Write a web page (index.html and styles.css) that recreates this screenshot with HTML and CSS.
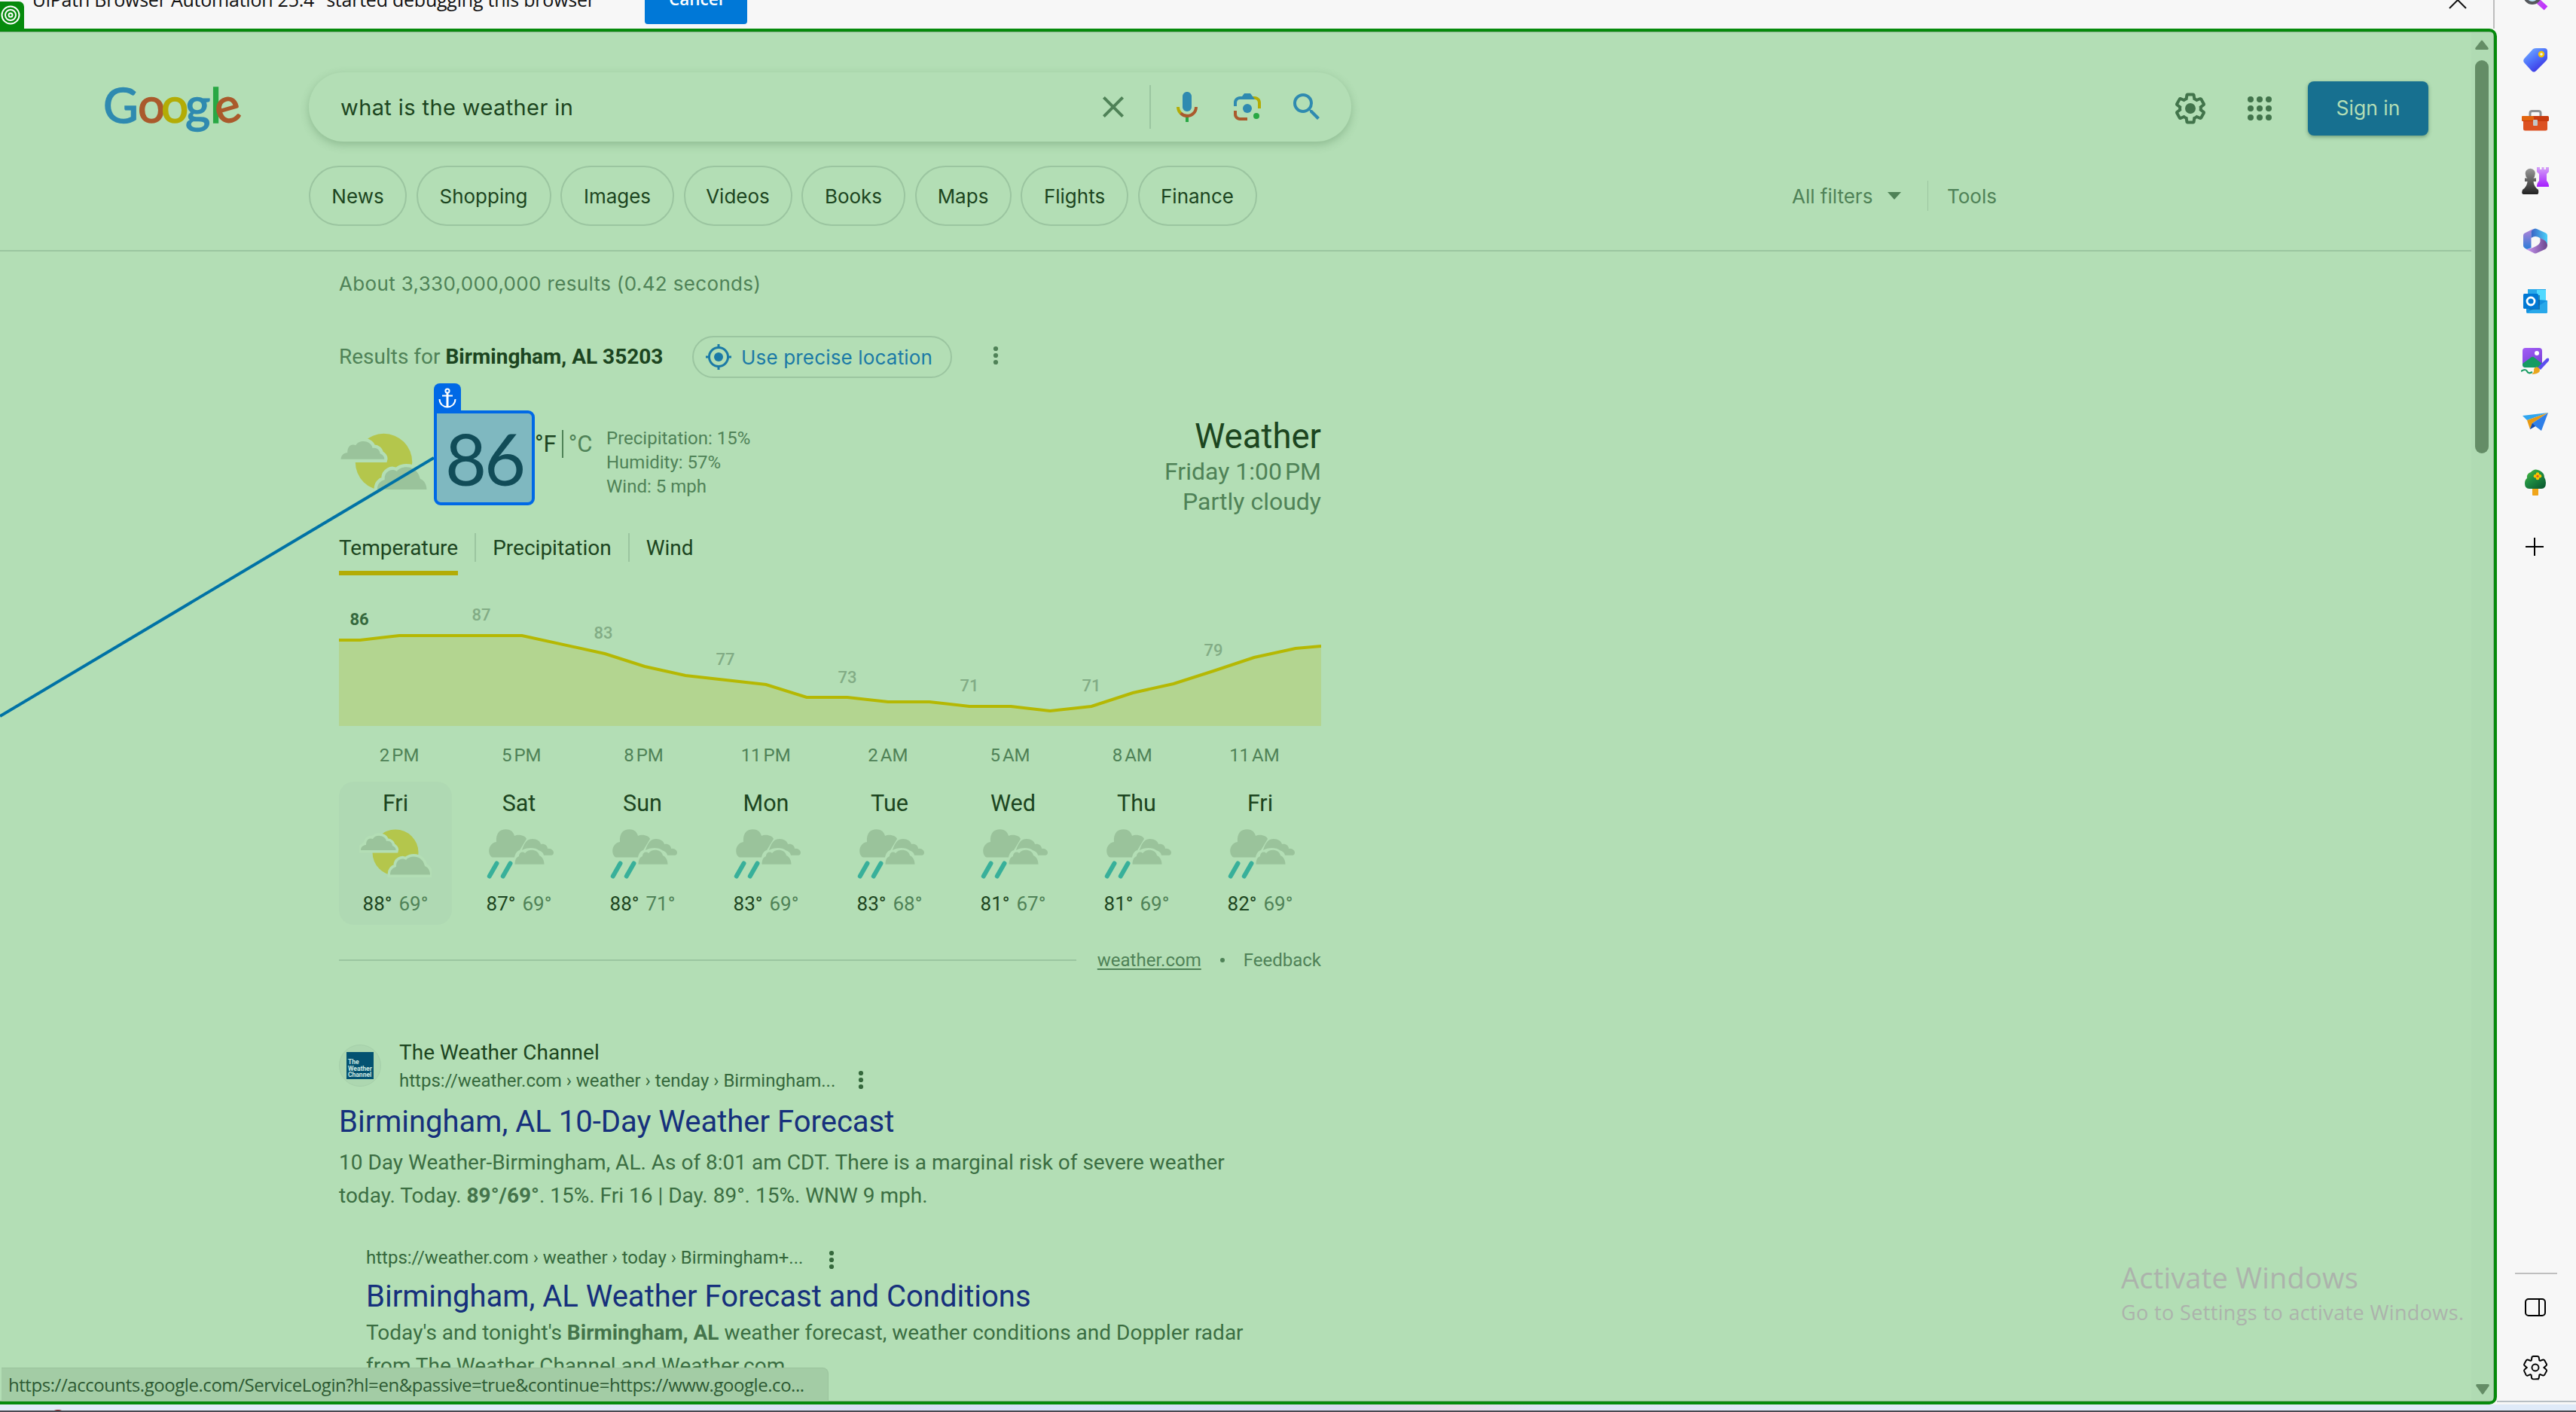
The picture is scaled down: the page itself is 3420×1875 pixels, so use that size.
FILE: index.html
```html
<!DOCTYPE html>
<html lang="en">
<head>
<meta charset="utf-8">
<title>what is the weather in - Search</title>
<link rel="stylesheet" href="styles.css">
</head>
<body>
<svg class="defs" aria-hidden="true">
  <symbol id="sun" viewBox="0 0 96 80">
    <circle cx="48" cy="40" r="30.5" fill="#b4c64c"/>
    <path class="cloud halo" d="M2 37C2 32 6 30 9 30C9 23 13 20 18 22C21 16 34 16 36 25C41 24 44 28 44 31C47 32 49 35 48.500 37Z"/>
    <path class="cloud halo" d="M41 69.500C41 63 45 60 49 59C48 50 57 46 62 50C67 43 84 43 87 58C92 60 94 65 94 69.500Z"/>
    <path class="cloud" d="M2 37C2 32 6 30 9 30C9 23 13 20 18 22C21 16 34 16 36 25C41 24 44 28 44 31C47 32 49 35 48.500 37Z"/>
    <path class="cloud" d="M41 69.500C41 63 45 60 49 59C48 50 57 46 62 50C67 43 84 43 87 58C92 60 94 65 94 69.500Z"/>
  </symbol>
  <symbol id="rain" viewBox="0 0 96 80">
    <path class="cloud" d="M13 46.500C6 44 6 28 18 26C17 14 23 9.300 30.500 9.300C38 9.300 41 14 42 18C48 15 57 18 58 22L49 37C45 38 43 42 42 46.500Z"/>
    <path class="cloud" d="M52 37C55 28 58 22 66 22C72 22 76 25 77 29C82 28 86 31 86 35C91 34 94 38 94 40C94 43 92 43.700 91 43.700L81 43.700C80 39 76 38 74 37C70 33 58 33 52 37Z"/>
    <path class="cloud halo-thin" d="M42.500 55.800C42.500 49 45 46 48 45C48 40 53 38 56 41C60 35 73 35 75 44C79 46 81.500 50 81.500 55.800Z"/>
    <path d="M18.500 54.500L8.800 71.500M36.500 54.500L26.800 71.500" stroke="#38b09a" stroke-width="6" stroke-linecap="round"/>
  </symbol>
  <symbol id="dots" viewBox="0 0 8 28">
    <circle cx="4" cy="5" r="3.100"/><circle cx="4" cy="14" r="3.100"/><circle cx="4" cy="23" r="3.100"/>
  </symbol>
</svg>

<div class="window">
  <div class="left">
    <div class="infobar">
      <span class="infobar-text">"UiPath Browser Automation 25.4" started debugging this browser</span>
      <span class="cancel">Cancel</span>
      <svg class="close" width="24" height="24" viewBox="0 0 24 24"><path d="M1 1L23 23M23 1L1 23" stroke="#111" stroke-width="2"/></svg>
    </div>

    <div class="viewport">
      <div class="page">
        <header class="header">
          <div class="search-row">
            <div class="logo"><span class="b g1">G</span><span class="r o1">o</span><span class="y o2">o</span><span class="b g2">g</span><span class="g l1">l</span><span class="r e1">e</span></div>
            <div class="searchbox">
              <span class="query">what is the weather in</span>
              <svg class="ico clear" viewBox="0 0 24 24"><path fill="#4f8257" d="M19 6.410L17.590 5 12 10.590 6.410 5 5 6.410 10.590 12 5 17.590 6.410 19 12 13.410 17.590 19 19 17.590 13.410 12z"/></svg>
              <span class="sep"></span>
              <svg class="ico mic" viewBox="0 0 24 24"><path fill="#2f8ab0" d="m12 15c1.660 0 3-1.310 3-2.970v-7.020c0-1.660-1.340-3.010-3-3.010s-3 1.340-3 3.010v7.020c0 1.660 1.340 2.970 3 2.970z"/><path fill="#29a844" d="m11 18.080h2v3.920h-2z"/><path fill="#b3ac06" d="m7.050 16.870c-1.270-1.330-2.050-2.830-2.050-4.870h2c0 1.450 0.560 2.420 1.470 3.380v0.320l-1.150 1.180z"/><path fill="#aa5a2c" d="m12 16.930a4.970 5.250 0 0 1 -3.540 -1.550l-1.410 1.490c1.260 1.340 3.020 2.130 4.950 2.130 3.870 0 6.990-2.920 6.990-7h-1.990c0 2.920-2.240 4.930-5 4.930z"/></svg>
              <svg class="ico lens" viewBox="0 0 192 192"><circle fill="#29a844" cx="144" cy="144" r="16"/><circle fill="#2f8ab0" cx="96" cy="104" r="24"/><path fill="#aa5a2c" d="M24,135.200c0,18.110,14.690,32.800,32.800,32.800H96v-16l-40.100-0.100c-8.800,0-15.900-8.190-15.900-17.900v-18H24V135.200z"/><path fill="#b3ac06" d="M168,72.800c0-18.110-14.690-32.800-32.800-32.800H116l20,16c8.800,0,16,8.290,16,18v30h16V72.800z"/><path fill="#2f8ab0" d="M112,24l-32,0L68,40H56.800C38.690,40,24,54.690,24,72.800V92h16V74c0-9.710,7.200-18,16-18h80L112,24z"/></svg>
              <svg class="ico" viewBox="0 0 24 24"><path fill="#2f8ab0" d="M15.500 14h-.79l-.28-.27A6.471 6.471 0 0 0 16 9.500 6.500 6.500 0 1 0 9.500 16c1.610 0 3.090-.59 4.230-1.570l.27.28v.79l5 4.990L20.490 19l-4.990-5zm-6 0C7.010 14 5 11.990 5 9.500S7.010 5 9.500 5 14 7.010 14 9.500 11.990 14 9.500 14z"/></svg>
            </div>
            <div class="account">
              <svg class="ico" viewBox="0 0 24 24" fill="#42744b"><path d="M13.850 22.250h-3.700c-.74 0-1.360-.54-1.450-1.270l-.27-1.890c-.27-.14-.53-.29-.79-.46l-1.800.72c-.7.26-1.470-.03-1.810-.65L2.200 15.530c-.35-.66-.2-1.440.36-1.880l1.530-1.190c-.01-.15-.02-.3-.02-.46 0-.15.010-.31.020-.46l-1.520-1.190c-.59-.45-.74-1.260-.37-1.880l1.850-3.190c.34-.62 1.110-.9 1.790-.63l1.810.73c.26-.17.52-.32.78-.46l.27-1.910c.09-.7.71-1.250 1.440-1.250h3.700c.74 0 1.360.54 1.450 1.270l.27 1.890c.27.14.53.29.79.46l1.800-.72c.71-.26 1.480.03 1.820.65l1.840 3.180c.36.66.2 1.440-.36 1.880l-1.520 1.190c.01.15.02.3.02.46s-.01.31-.02.46l1.520 1.190c.56.45.72 1.230.37 1.860l-1.860 3.220c-.34.62-1.110.9-1.800.63l-1.800-.72c-.26.17-.52.32-.78.46l-.27 1.910c-.1.68-.72 1.220-1.460 1.220zm-3.230-2h2.760l.37-2.550.53-.22c.44-.18.88-.44 1.340-.78l.45-.34 2.380.96 1.380-2.400-2.030-1.580.07-.56c.03-.26.06-.51.06-.78s-.03-.53-.06-.78l-.07-.56 2.030-1.580-1.390-2.400-2.390.96-.45-.35c-.42-.32-.87-.58-1.330-.77l-.52-.22-.37-2.550h-2.760l-.37 2.550-.53.21c-.44.19-.88.44-1.340.79l-.45.33-2.380-.95-1.390 2.390 2.030 1.580-.07.56a7 7 0 0 0-.06.79c0 .26.02.53.06.78l.07.56-2.030 1.580 1.380 2.400 2.390-.96.45.35c.43.33.86.58 1.330.77l.53.22.38 2.550z"/><circle cx="12" cy="12" r="3.500"/></svg>
              <svg class="ico apps" viewBox="0 0 24 24" fill="#42744b"><circle cx="6" cy="6" r="2"/><circle cx="12" cy="6" r="2"/><circle cx="18" cy="6" r="2"/><circle cx="6" cy="12" r="2"/><circle cx="12" cy="12" r="2"/><circle cx="18" cy="12" r="2"/><circle cx="6" cy="18" r="2"/><circle cx="12" cy="18" r="2"/><circle cx="18" cy="18" r="2"/></svg>
              <span class="signin">Sign in</span>
            </div>
          </div>
          <div class="chip-row">
            <span class="chip c1">News</span>
            <span class="chip c2">Shopping</span>
            <span class="chip c3">Images</span>
            <span class="chip c4">Videos</span>
            <span class="chip c5">Books</span>
            <span class="chip c6">Maps</span>
            <span class="chip c7">Flights</span>
            <span class="chip c8">Finance</span>
            <div class="tools">
              <span class="filters">All filters</span>
              <svg width="18" height="10" viewBox="0 0 18 10"><path d="M0 0H18L9 10Z" fill="#4f8257"/></svg>
              <span class="tools-sep"></span>
              <span>Tools</span>
            </div>
          </div>
        </header>

        <main class="results">
          <div class="stats">About 3,330,000,000 results (0.42 seconds)</div>
          <div class="location">
            <span class="loc-text">Results for <b>Birmingham, AL 35203</b></span>
            <span class="precise">
              <svg width="34" height="34" viewBox="0 0 34 34" fill="none" stroke="#1b7aa6"><circle cx="17" cy="17" r="12.500" stroke-width="3"/><circle cx="17" cy="17" r="6" fill="#1b7aa6" stroke="none"/><path d="M17 0V5M17 29V34M0 17H5M29 17H34" stroke-width="3"/></svg>
              <span class="precise-text">Use precise location</span>
            </span>
            <svg class="dots" width="8" height="28" fill="#4f8257"><use href="#dots"/></svg>
          </div>

          <section class="now">
            <svg class="now-icon" width="119" height="99"><use href="#sun"/></svg>
            <div class="target"><span class="anchor"><svg width="24" height="27" viewBox="0 0 24 27" fill="none" stroke="#fff" stroke-width="2"><circle cx="12" cy="4" r="2.600"/><path d="M5 10.500H19"/><path d="M12 7V25" stroke-width="3"/><path d="M1.500 15C2 29 22 29 22.500 15"/></svg></span>86</div>
            <div class="unit"><span>°F</span><span class="unit-sep"></span><span class="c">°C</span></div>
            <div class="details"><div>Precipitation: 15%</div><div>Humidity: 57%</div><div>Wind: 5 mph</div></div>
            <div class="summary"><div class="summary-title">Weather</div><div>Friday 1:00&#8239;PM</div><div>Partly cloudy</div></div>
          </section>

          <div class="tabs">
            <span class="tab active">Temperature</span>
            <span class="tab-sep"></span>
            <span class="tab">Precipitation</span>
            <span class="tab-sep"></span>
            <span class="tab">Wind</span>
          </div>

          <svg class="chart" width="1304" height="200" viewBox="450 764 1304 200">
            <path d="M450 850H478L530 844H693L803 868L856 885L910 897L1017 909L1071 926H1125L1179 932H1234L1287 938H1342L1394 944L1449 938L1504 920L1558 908L1611 891L1665 873L1720 861L1754 858V964H450Z" fill="#b3d590"/>
            <path d="M450 850H478L530 844H693L803 868L856 885L910 897L1017 909L1071 926H1125L1179 932H1234L1287 938H1342L1394 944L1449 938L1504 920L1558 908L1611 891L1665 873L1720 861L1754 858" fill="none" stroke="#b5b803" stroke-width="4"/>
            <g class="chart-labels">
              <text class="first" x="477" y="830">86</text><text x="639" y="824">87</text><text x="801" y="848">83</text><text x="963" y="883">77</text><text x="1125" y="907">73</text><text x="1287" y="918">71</text><text x="1449" y="918">71</text><text x="1611" y="871">79</text>
            </g>
          </svg>
          <div class="hours"><span>2&#8239;PM</span><span>5&#8239;PM</span><span>8&#8239;PM</span><span>11&#8239;PM</span><span>2&#8239;AM</span><span>5&#8239;AM</span><span>8&#8239;AM</span><span>11&#8239;AM</span></div>

          <div class="days">
            <div class="day selected"><div class="name">Fri</div><svg width="96" height="80"><use href="#sun"/></svg><div class="temps"><b>88°</b><span>69°</span></div></div>
            <div class="day"><div class="name">Sat</div><svg width="96" height="80"><use href="#rain"/></svg><div class="temps"><b>87°</b><span>69°</span></div></div>
            <div class="day"><div class="name">Sun</div><svg width="96" height="80"><use href="#rain"/></svg><div class="temps"><b>88°</b><span>71°</span></div></div>
            <div class="day"><div class="name">Mon</div><svg width="96" height="80"><use href="#rain"/></svg><div class="temps"><b>83°</b><span>69°</span></div></div>
            <div class="day"><div class="name">Tue</div><svg width="96" height="80"><use href="#rain"/></svg><div class="temps"><b>83°</b><span>68°</span></div></div>
            <div class="day"><div class="name">Wed</div><svg width="96" height="80"><use href="#rain"/></svg><div class="temps"><b>81°</b><span>67°</span></div></div>
            <div class="day"><div class="name">Thu</div><svg width="96" height="80"><use href="#rain"/></svg><div class="temps"><b>81°</b><span>69°</span></div></div>
            <div class="day"><div class="name">Fri</div><svg width="96" height="80"><use href="#rain"/></svg><div class="temps"><b>82°</b><span>69°</span></div></div>
          </div>

          <div class="credit"><span class="rule"></span><u>weather.com</u><span class="bullet"></span><span>Feedback</span></div>

          <article class="hit">
            <div class="hit-head">
              <span class="favicon"><span class="favicon-box">The<br>Weather<br>Channel</span></span>
              <div>
                <div class="site">The Weather Channel</div>
                <div class="url"><span>https://weather.com › weather › tenday › Birmingham...</span><svg class="dots" width="8" height="28" fill="#35683c"><use href="#dots"/></svg></div>
              </div>
            </div>
            <h3>Birmingham, AL 10-Day Weather Forecast</h3>
            <p>10 Day Weather-Birmingham, AL. As of 8:01 am CDT. There is a marginal risk of severe weather<br>today. Today. <b>89°/69°</b>. 15%. Fri 16 | Day. 89°. 15%. WNW 9 mph.</p>
          </article>

          <article class="hit sub">
            <div class="url"><span>https://weather.com › weather › today › Birmingham+...</span><svg class="dots" width="8" height="28" fill="#35683c"><use href="#dots"/></svg></div>
            <h3>Birmingham, AL Weather Forecast and Conditions</h3>
            <p>Today's and tonight's <b>Birmingham, AL</b> weather forecast, weather conditions and Doppler radar<br>from The Weather Channel and Weather.com</p>
          </article>
        </main>
      </div>
      <div class="scrollbar">
        <svg width="18" height="13" viewBox="0 0 18 13"><path d="M8 1Q9 0 10 1L17.500 10.500Q18.500 13 16 13H2Q-.5 13 .5 10.500Z" fill="#648d66"/></svg>
        <span class="thumb"></span>
        <svg class="down" width="18" height="14" viewBox="0 0 18 14"><path d="M8 13Q9 14 10 13L17.500 2.500Q18.500 0 16 0H2Q-.5 0 .5 2.500Z" fill="#648d66"/></svg>
      </div>
    </div>
  </div>

  <aside class="sidebar">
    <div class="side-item"><svg width="36" height="36" viewBox="0 0 36 36"><defs><linearGradient id="mag" x1="0" x2="1"><stop stop-color="#c04cf0"/><stop offset="1" stop-color="#c030ff"/></linearGradient></defs><path d="M22 22L32 31" stroke="url(#mag)" stroke-width="7"/><circle cx="14" cy="14" r="10" fill="#bfe6fb" stroke="#55585c" stroke-width="4"/></svg></div>
    <div class="side-item"><svg width="32" height="32" viewBox="0 0 32 32"><defs><linearGradient id="tag" x1="0" y1="0" x2=".7" y2="1"><stop stop-color="#7ab8ff"/><stop offset=".5" stop-color="#4f74fb"/><stop offset="1" stop-color="#3a2fe0"/></linearGradient></defs><path d="M13 1Q15 0 17 0H28Q32 0 32 4V13Q32 15 30 17L17 30Q14 33 11 30L1 19Q-1 16 2 13Z" fill="url(#tag)"/><circle cx="24" cy="8" r="3" fill="#e8f0ff" stroke="#f6c400" stroke-width="2.400"/></svg></div>
    <div class="side-item"><svg width="36" height="28" viewBox="0 0 36 28"><path d="M11 8V4Q11 1.500 14 1.500H22Q25 1.500 25 4V8" fill="none" stroke="#8d8f92" stroke-width="3"/><rect x="2" y="10" width="32" height="17.500" rx="2.500" fill="#dc5122"/><rect y="8" width="36" height="7" rx="1.500" fill="#c83b0f"/><rect y="8" width="16" height="6" rx="1.500" fill="#e2650f"/><rect x="15" y="13" width="6" height="8" rx="1" fill="#c3c6c8"/></svg></div>
    <div class="side-item"><svg width="36" height="36" viewBox="0 0 36 36"><defs><linearGradient id="pawn" x2="0" y2="1"><stop stop-color="#999"/><stop offset="1" stop-color="#222"/></linearGradient><linearGradient id="rook" x2="0" y2="1"><stop stop-color="#d5a2f7"/><stop offset="1" stop-color="#a51dff"/></linearGradient></defs><path d="M20 0H24V3H26.500V0H29.500V3H32V0H36V6L33 9V18Q36 21 36 26H20Q20 21 23 18V9L20 6Z" fill="url(#rook)"/><path d="M5 10A6.500 6.500 0 1 1 17.500 10Q17.500 13 15.500 14.500H19V19H15.500Q16 26 22 30Q23 36 20 36H2Q-1 36 1 30Q7 26 7.500 19H4V14.500H7.500Q5 13 5 10Z" fill="url(#pawn)"/></svg></div>
    <div class="side-item"><svg width="32" height="34" viewBox="0 0 32 34"><defs><linearGradient id="ma" y2="1" x2="0"><stop stop-color="#b583d8"/><stop offset="1" stop-color="#2a7bd8"/></linearGradient><linearGradient id="mb"><stop stop-color="#3a63c5"/><stop offset="1" stop-color="#49cff8"/></linearGradient><linearGradient id="mc"><stop stop-color="#cb97f3"/><stop offset="1" stop-color="#69468c"/></linearGradient></defs><path d="M0 10Q0 7 3 6L13 1Q10 4 10.500 9V26L5 28Q0 26 0 23Z" fill="url(#ma)"/><path d="M10.500 13V5Q11 2 14 1Q16 0 18 1L29 6Q32 7 32 10V22Q30 16 22 13Q16 9 10.500 13Z" fill="url(#mb)"/><path d="M4 28Q13 27 20 22Q24 18 22 13Q31 16 32 22Q32 26 29 28L18 33Q16 34 14 33Z" fill="url(#mc)"/></svg></div>
    <div class="side-item"><svg width="32" height="32" viewBox="0 0 32 32"><rect x="6" width="24" height="26" fill="#28a8ea"/><rect x="18" y="1" width="12" height="14" fill="#50d9ff"/><path d="M4 14H20L32 15V30Q32 32 30 32H6Q4 32 4 30Z" fill="#1490df"/><path d="M32 15L4 32H30Q32 32 32 30Z" fill="#28a8ea"/><path d="M8 8H22V27H8Z" fill="#0a4e86" opacity=".6"/><rect y="6" width="20" height="20" rx="1.500" fill="#0078d4"/><circle cx="10" cy="16" r="5" fill="none" stroke="#fff" stroke-width="2.800"/></svg></div>
    <div class="side-item"><svg width="38" height="36" viewBox="0 0 38 36"><defs><linearGradient id="pic" x2=".5" y2="1"><stop stop-color="#a35df6"/><stop offset="1" stop-color="#7a41d8"/></linearGradient></defs><rect x="2" width="26" height="26" rx="4" fill="url(#pic)"/><circle cx="21" cy="7" r="3" fill="#fff"/><path d="M2 21L14 12Q16 11 18 13L28 21V26H6Q2 26 2 22Z" fill="#169b62"/><path d="M0 31Q6 27 8 31Q10 35 15 32" fill="none" stroke="#169b62" stroke-width="2.200"/><path d="M22 26L34 14Q38 12 37 17L26 29Z" fill="#5b4df0"/><path d="M14 35Q18 33 17 28Q20 23 24 27Q28 34 14 35Z" fill="#eaa61d"/></svg></div>
    <div class="side-item"><svg width="34" height="25" viewBox="0 0 34 25"><path d="M0 4L34 0L6 10Z" fill="#30a5ef"/><path d="M6 10L34 0L13 14L10 22Z" fill="#e99a12"/><path d="M13 14L34 0L25 24L17 18L10 22Z" fill="#2f7fe8"/><path d="M10 22L13 14L17 18Z" fill="#1549a8"/></svg></div>
    <div class="side-item"><svg width="28" height="35" viewBox="0 0 28 35"><defs><linearGradient id="tree" x2=".8" y2="1"><stop stop-color="#4fc23d"/><stop offset=".5" stop-color="#1f8c42"/><stop offset="1" stop-color="#0b5c30"/></linearGradient></defs><rect x="10" y="24" width="8" height="11" rx="1" fill="#f0a51a"/><path d="M6 26Q0 26 0 19Q0 14 3 12Q2 6 8 4Q13-2 20 2Q26 5 26 11Q28 14 28 18Q28 26 22 26Z" fill="url(#tree)"/><g fill="#fbc400"><circle cx="17" cy="6.500" r="2.300"/><circle cx="17" cy="12" r="2.300"/><circle cx="14" cy="9.300" r="2.300"/><circle cx="20" cy="9.300" r="2.300"/></g><circle cx="17" cy="9.300" r="1.600" fill="#e0591c"/></svg></div>
    <div class="side-item add"><svg width="24" height="24" viewBox="0 0 24 24"><path d="M12 0V24M0 12H24" stroke="#000" stroke-width="2"/></svg></div>
    <div class="side-bottom">
      <span class="side-rule"></span>
      <div class="side-item"><svg width="28" height="24" viewBox="0 0 28 24" fill="none" stroke="#000" stroke-width="2"><rect x="1" y="1" width="26" height="22" rx="4"/><path d="M19 1V23"/></svg></div>
      <div class="side-item"><svg width="36" height="36" viewBox="0 0 24 24" fill="none" stroke="#000" stroke-width="1.300"><path d="M13.850 22.250h-3.700c-.74 0-1.360-.54-1.450-1.270l-.37-2.490c-.27-.14-.43-.19-.69-.36l-2.300.92c-.7.26-1.270-.03-1.610-.65L2.200 15.230c-.35-.66-.2-1.140.36-1.580l1.930-1.650-1.920-1.650c-.59-.45-.74-.96-.37-1.580l1.650-2.990c.34-.62 1.110-.9 1.790-.63l2.210.83c.26-.17.42-.22.68-.36l.37-2.410c.09-.7.71-1.250 1.440-1.250h3.400c.74 0 1.360.54 1.450 1.270l.37 2.390c.27.14.43.19.69.36l2.200-.82c.71-.26 1.480.03 1.820.65l1.640 2.980c.36.66.2 1.140-.36 1.580l-1.920 1.650 1.920 1.650c.56.45.72.93.37 1.560l-1.660 3.020c-.34.62-1.110.9-1.800.63l-2.200-.82c-.26.17-.42.22-.68.36l-.37 2.510c-.1.680-.72 1.220-1.460 1.220z"/><circle cx="12" cy="12" r="3"/></svg></div>
    </div>
  </aside>
</div>
<footer class="taskbar"><span class="task-icon"></span></footer>

<span class="recorder-badge"><svg width="26" height="26" viewBox="0 0 26 26" fill="none" stroke="#fff" stroke-width="2"><circle cx="13" cy="13" r="11.500"/><circle cx="13" cy="13" r="7"/><circle cx="13" cy="13" r="2.500"/></svg></span>
<svg class="connector" width="576" height="348" viewBox="0 0 576 348"><path d="M0 345L576 2" stroke="#0072a5" stroke-width="4"/></svg>
<div class="status">https://accounts.google.com/ServiceLogin?hl=en&amp;passive=true&amp;continue=https://www.google.co...</div>
<div class="watermark"><div class="wm-title">Activate Windows</div><div class="wm-sub">Go to Settings to activate Windows.</div></div>
</body>
</html>
```
FILE: styles.css
```css
* { box-sizing: border-box; }
body {
  margin: 0;
  width: 3420px;
  height: 1875px;
  overflow: hidden;
  position: relative;
  background: #f7f7f7;
  font-family: Roboto, "Liberation Sans", sans-serif;
  font-size: 28px;
  color: #1c4520;
}
svg { display: block; flex: none; }
.defs { position: absolute; width: 0; height: 0; }
.cloud { fill: #9ac39b; }
.halo { stroke: #b3deb5; stroke-width: 7; }
.halo-thin { stroke: #b3deb5; stroke-width: 3; paint-order: stroke; }

.window { display: flex; height: 1865px; }
.left { width: 3315px; }

/* Debugging notice */
.infobar {
  display: flex;
  height: 38px;
  align-items: flex-start;
  border-right: 2px solid #bdbdbd;
  width: 3312px;
  overflow: hidden;
  color: #111;
  font-family: "Open Sans", "Noto Sans", sans-serif;
  font-size: 25px;
  line-height: 36px;
}
.infobar-text { margin: -19px 0 0 33px; width: 823px; white-space: nowrap; letter-spacing: -.23px; }
.cancel {
  width: 136px;
  height: 52px;
  margin-top: -20px;
  padding-top: 1px;
  border-radius: 4px;
  background: #0078d7;
  color: #fff;
  font-weight: 600;
  font-size: 22.500px;
  text-align: center;
  line-height: 36px;
}
.close { margin: -12px 0 0 2259px; }

/* Highlighted viewport */
.viewport {
  display: flex;
  height: 1827px;
  border: 4px solid #068a0c;
  border-left: 0;
  border-radius: 0 10px 10px 0;
  background: #b3deb5;
  overflow: hidden;
  box-shadow: inset 0 1px #8fb392, inset -1px 0 #8fb392, inset 0 -1px #8fb392;
}
.page { width: 3281px; overflow: hidden; margin: 1px 0; }
.scrollbar {
  width: 29px;
  margin: 1px 0;
  padding: 10px 0 8px 5px;
  display: flex;
  flex-direction: column;
  background: #b0dbb3;
}
.thumb { width: 18px; height: 522px; margin-top: 14px; border-radius: 9px; background: #648d66; }
.down { margin-top: auto; margin-left: 1px; }

.header {
  height: 291px;
  padding-top: 53px;
  border-bottom: 2px solid #9bc5a0;
  font-family: Inter, Roboto, sans-serif;
  font-size: 26px;
}
.search-row { display: flex; height: 92px; }
.ico { width: 48px; height: 48px; }
.logo {
  display: flex;
  width: 273px;
  margin-left: 137px;
  font-family: Lato, sans-serif;
  font-size: 64px;
  line-height: 92px;
  -webkit-text-stroke: 1.5px currentColor;
}
.logo span { display: block; margin-top: -3px; }
.logo .b { color: #2f8ab0; }
.logo .r { color: #aa5a2c; }
.logo .y { color: #b3ac06; }
.logo .g { color: #29a844; }
.g1 { width: 46px; }
.o1 { width: 31px; }
.o2 { width: 32px; }
.g2 { width: 33px; }
.l1 { width: 9px; }
.e1 { width: 28px; transform: rotate(-16deg); transform-origin: 50% 65%; }
.searchbox {
  display: flex;
  align-items: center;
  width: 1384px;
  padding-left: 42px;
  border-radius: 46px;
  box-shadow: 0 4px 12px rgba(60, 110, 65, .3);
}
.query { width: 1002px; font-size: 29px; letter-spacing: .4px; white-space: nowrap; }
.sep { width: 2px; height: 58px; margin: 0 24px; background: #9bc5a0; }
.mic { margin-right: 32px; }
.lens { margin-right: 31px; }
.account { display: flex; align-items: center; margin: 2px 0 0 1090px; height: 92px; }
.apps { margin: 0 40px 0 44px; }
.signin {
  width: 160px;
  height: 72px;
  border-radius: 8px;
  background: #177090;
  color: #b3deb5;
  text-align: center;
  line-height: 71px;
  font-size: 26.500px;
  box-shadow: 0 2px 5px rgba(30, 80, 50, .45);
}
.chip-row { display: flex; height: 80px; margin: 32px 0 0 410px; }
.chip {
  border: 2px solid #9bc5a0;
  border-radius: 40px;
  margin-right: 12.500px;
  text-align: center;
  line-height: 77px;
  white-space: nowrap;
}
.c1 { width: 130px; } .c2 { width: 179px; } .c3 { width: 151px; } .c4 { width: 144px; }
.c5 { width: 138px; } .c6 { width: 128px; } .c7 { width: 143px; } .c8 { width: 158px; }
.tools { display: flex; align-items: center; margin-left: 698px; color: #4f8257; white-space: nowrap; }
.filters { width: 127px; }
.tools-sep { width: 1px; height: 40px; margin: 0 25px 0 35px; background: #9bc5a0; }

.results { width: 1304px; margin-left: 450px; padding-top: 23px; }
.stats { height: 40px; line-height: 40px; font-family: Inter, Roboto, sans-serif; font-size: 26px; letter-spacing: .35px; color: #4f8257; white-space: nowrap; }
.location { display: flex; align-items: center; height: 56px; margin-top: 49px; color: #4f8257; }
.location b { color: #1c4520; font-weight: 700; }
.loc-text { width: 469px; white-space: nowrap; line-height: 56px; }
.precise {
  display: flex;
  align-items: center;
  width: 345px;
  height: 56px;
  padding-left: 16px;
  border: 2px solid #9bc5a0;
  border-radius: 28px;
  color: #1b7aa6;
  font-family: Inter, Roboto, sans-serif;
  font-size: 26px;
  letter-spacing: .17px;
  white-space: nowrap;
}
.precise-text { margin-left: 13px; }
.location .dots { margin: -4px 0 0 54px; }

.now { display: flex; height: 206px; }
.now-icon { margin: 62px 7px 0 0; }
.target {
  position: relative;
  width: 134px;
  height: 126px;
  margin-top: 43px;
  border: 4px solid #0069e6;
  border-radius: 0 9px 9px 9px;
  background: #7fb8c0;
  color: #114c58;
  font-family: Lato, sans-serif;
  font-size: 95px;
  letter-spacing: -3px;
  line-height: 118px;
  text-align: center;
}
.anchor {
  position: absolute;
  left: -4px;
  top: -40px;
  width: 36px;
  height: 38px;
  padding: 6px;
  border-radius: 8px 8px 0 0;
  background: #0069e6;
}
.unit { display: flex; width: 95px; height: 38px; margin-top: 69px; font-size: 31px; line-height: 38px; }
.unit-sep { width: 2px; height: 37px; margin: 0 7px; background: #4f8257; }
.c, .details, .summary { color: #4f8257; }
.details { margin-top: 64px; font-size: 24px; line-height: 32px; white-space: nowrap; }
.summary { margin: 51px 0 0 auto; text-align: right; font-size: 32px; line-height: 40px; }
.summary-title { font-size: 45.500px; line-height: 53px; color: #1c4520; }

.tabs { display: flex; height: 56px; }
.tab { height: 56px; padding-top: 1px; line-height: 38px; }
.tab.active { border-bottom: 6px solid #b3ac06; }
.tab-sep { width: 2px; height: 38px; margin: 0 22px; background: #9bc5a0; }

.chart-labels { font-size: 22px; font-weight: 500; text-anchor: middle; fill: #82ac85; }
.chart-labels .first { fill: #35683c; font-weight: 700; }
.hours { display: flex; height: 74px; margin-left: -1px; padding-top: 24px; font-size: 24px; line-height: 30px; color: #4f8257; }
.hours > span { flex: 0 0 162.200px; text-align: center; }
.days { display: flex; gap: 14px; height: 190px; }
.day { width: 150px; padding-top: 9px; display: flex; flex-direction: column; align-items: center; border-radius: 20px; }
.selected { background: #afd9b3; }
.name { font-size: 30.500px; line-height: 40px; height: 45px; }
.temps { display: flex; gap: 9px; margin-top: 12px; font-size: 26px; line-height: 32px; color: #4f8257; }
.temps b { font-weight: 400; color: #1c4520; }

.credit { display: flex; align-items: center; margin-top: 32px; height: 30px; font-size: 24px; line-height: 30px; color: #4f8257; }
.rule { flex: 1; height: 2px; margin-right: 28px; background: #9bc5a0; }
.bullet { width: 6px; height: 6px; border-radius: 3px; margin: 0 25px; background: #4f8257; }
.credit u { text-underline-offset: 3px; text-decoration-thickness: 2px; }

.hit { margin-top: 90px; white-space: nowrap; color: #3b6e42; }
.hit-head { display: flex; height: 74px; }
.favicon { display: flex; align-items: center; justify-content: center; width: 56px; height: 56px; margin: 7px 24px 0 0; border-radius: 28px; background: #add7b0; border: 1px solid #a6d0aa; }
.favicon-box { width: 36px; height: 36px; padding: 9px 0 0 2px; background: #035271; color: #cfe9e0; font-size: 8.500px; font-weight: 700; line-height: 8.600px; }
.site { line-height: 36px; color: #1c4520; }
.url { display: flex; align-items: center; height: 38px; font-size: 24px; color: #35683c; }
.url .dots { margin: -2px 0 0 30px; }
.hit h3 { margin: 10px 0 0; font-weight: 400; font-size: 40px; line-height: 52px; color: #16307c; }
.hit p { margin: 6px 0 0; line-height: 44px; }
.hit p b { color: #44744b; }
.hit.sub { margin: 41px 0 0 36px; }
.sub .url .dots { margin: 6px 0 0 34px; }
.sub h3 { margin-top: 7px; }
.sub p { margin-top: 0; }

/* Browser sidebar */
.sidebar { display: flex; flex-direction: column; width: 105px; height: 1862px; padding-right: 4px; overflow: hidden; border-bottom: 2px solid #b8bfc4; }
.side-item { display: flex; flex: none; align-items: center; justify-content: center; height: 80px; }
.side-item:first-child { height: 40px; align-items: flex-end; padding-bottom: 24px; }
.add { height: 92px; padding-right: 2px; }
.side-bottom { margin-top: auto; padding-bottom: 4px; }
.side-bottom .side-item:nth-child(2) { height: 80px; }
.side-rule { display: block; width: 56px; height: 2px; margin: 0 0 4px 24px; background: #bfbfbf; }

.taskbar {
  height: 10px;
  overflow: hidden;
  border-bottom: 2px solid #4a4a52;
  background: linear-gradient(90deg, #e1ebf8, #e0ebf8 20%, #d5dcf3 35%, #d3e2fa 42%, #d6d9f0 52%, #e6dbe6 56.500%, #dbe4f5 60%, #dfeaf8 75%);
}
.task-icon { display: block; width: 26px; height: 26px; margin: 7px 0 0 64px; border-radius: 13px; background: #8c1010; }

/* Recorder overlays */
.recorder-badge { position: absolute; left: 0; top: 2px; width: 32px; height: 38px; padding: 5px 0 0 1px; border-radius: 0 7px 0 0; background: #068a0c; }
.connector { position: absolute; left: 0; top: 606px; }
.status {
  position: absolute;
  left: 2px;
  top: 1816px;
  width: 1098px;
  height: 45px;
  padding-left: 9px;
  border: 1px solid #9bc39d;
  border-left: 0;
  border-radius: 0 8px 0 0;
  background: #a3cca5;
  color: #2d5a33;
  font-family: "Open Sans", "Noto Sans", sans-serif;
  font-size: 24px;
  letter-spacing: -.45px;
  line-height: 44px;
  white-space: nowrap;
}
.watermark { position: absolute; left: 2816px; top: 1670px; color: #acb3ac; font-family: "Open Sans", "Noto Sans", sans-serif; white-space: nowrap; }
.wm-title { font-size: 38px; letter-spacing: .2px; line-height: 52px; }
.wm-sub { font-size: 27px; letter-spacing: .37px; line-height: 42px; }
```
